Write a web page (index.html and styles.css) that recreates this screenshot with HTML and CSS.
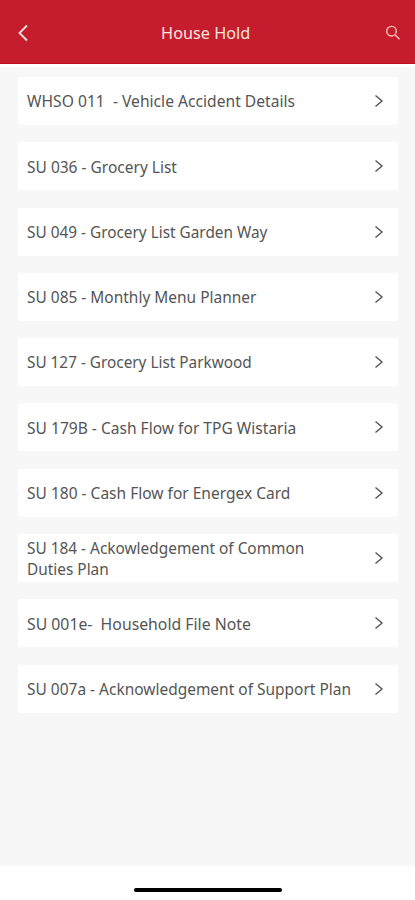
FILE: index.html
```html
<!DOCTYPE html>
<html lang="en">
<head>
<meta charset="utf-8">
<title>House Hold</title>
<link rel="stylesheet" href="styles.css">
</head>
<body>
<svg class="sprite" aria-hidden="true"><symbol id="chevron" viewBox="0 0 10 14"><path d="M1.5 1.5 8 7l-6.5 5.5"/></symbol></svg>
<header class="bar">
<svg class="back" viewBox="0 0 12 18"><path d="M10 1.5 2.5 9l7.5 7.5"/></svg>
<h1 class="title"><span>House Hold</span></h1>
<svg class="search" viewBox="0 0 16 16"><circle cx="6.5" cy="6.2" r="4.8"/><path d="m10 9.7 4.5 4.5"/></svg>
</header>
<main class="list">
<a class="row"><span class="label" style="--fit:.977">WHSO 011&nbsp; - Vehicle Accident Details</span><svg class="chevron"><use href="#chevron"/></svg></a>
<a class="row"><span class="label" style="--fit:.969">SU 036 - Grocery List</span><svg class="chevron"><use href="#chevron"/></svg></a>
<a class="row"><span class="label" style="--fit:.96">SU 049 - Grocery List Garden Way</span><svg class="chevron"><use href="#chevron"/></svg></a>
<a class="row"><span class="label" style="--fit:.966">SU 085 - Monthly Menu Planner</span><svg class="chevron"><use href="#chevron"/></svg></a>
<a class="row"><span class="label" style="--fit:.958">SU 127 - Grocery List Parkwood</span><svg class="chevron"><use href="#chevron"/></svg></a>
<a class="row"><span class="label" style="--fit:.973">SU 179B - Cash Flow for TPG Wistaria</span><svg class="chevron"><use href="#chevron"/></svg></a>
<a class="row"><span class="label" style="--fit:.97">SU 180 - Cash Flow for Energex Card</span><svg class="chevron"><use href="#chevron"/></svg></a>
<a class="row"><span class="label" style="--fit:.962">SU 184 - Ackowledgement of Common<br>Duties Plan</span><svg class="chevron"><use href="#chevron"/></svg></a>
<a class="row"><span class="label" style="--fit:.987">SU 001e-&nbsp; Household File Note</span><svg class="chevron"><use href="#chevron"/></svg></a>
<a class="row"><span class="label" style="--fit:.967">SU 007a - Acknowledgement of Support Plan</span><svg class="chevron"><use href="#chevron"/></svg></a>
</main>
<footer class="home"><div class="handle"></div></footer>
</body>
</html>
```
FILE: styles.css
```css
* { box-sizing: border-box; }
body { margin: 0; height: 900px; display: flex; flex-direction: column; background: #f7f7f7; color: #555; font-family: "Noto Sans", "Open Sans", sans-serif; overflow: hidden; }
svg { fill: none; stroke: currentColor; flex: none; }
.sprite { display: none; }
.bar { height: 64px; flex: none; display: flex; align-items: center; justify-content: space-between; padding: 2px 14px 0 17px; background: #c61d2e; border-bottom: 1px solid #bd0c20; color: #ffe5df; }
.back { width: 12px; height: 18px; stroke-width: 1.8; }
.title { margin: 0; padding-top: 1px; font-size: 17px; font-weight: 400; line-height: 22px; }
.title span { display: inline-block; transform: translateX(-1px) scaleX(.955); }
.search { width: 16px; height: 16px; stroke-width: 1.4; color: #ffc0b8; }
.list { flex: 1; border-top: 3px solid #fff; padding: 10px 17px 0 18px; display: flex; flex-direction: column; gap: 17.3px; }
.row { height: 48px; flex: none; display: flex; align-items: center; justify-content: space-between; padding: 0 14px 0 8.5px; background: #fff; border-radius: 2px; }
.label { padding-top: 2px; font-size: 16px; line-height: 21.5px; white-space: nowrap; transform: scaleX(var(--fit)); transform-origin: left; }
.chevron { width: 10px; height: 14px; stroke-width: 1.4; color: #555; }
.home { height: 34px; flex: none; background: #fff; display: flex; justify-content: center; padding-top: 22px; }
.handle { width: 148px; height: 4px; border-radius: 2px; background: #000; }
```
